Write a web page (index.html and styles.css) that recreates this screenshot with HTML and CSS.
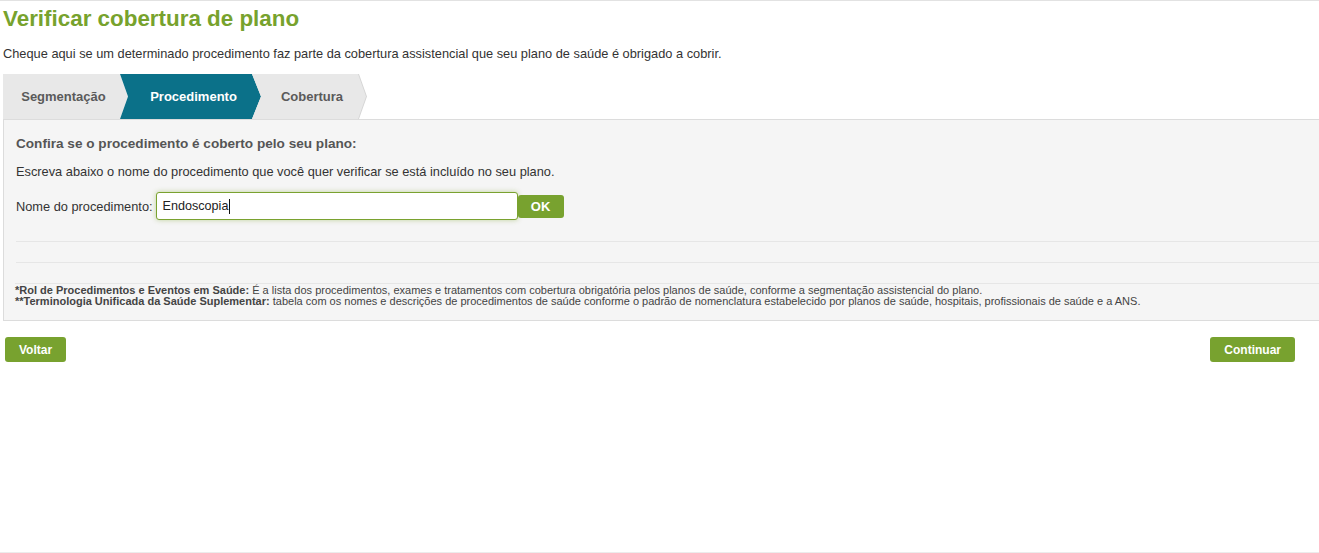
FILE: index.html
```html
<!DOCTYPE html>
<html lang="pt-BR">
<head>
<meta charset="utf-8">
<title>Verificar cobertura de plano</title>
<link rel="stylesheet" href="styles.css">
</head>
<body>
<div class="page">
  <h1 class="title">Verificar cobertura de plano</h1>
  <p class="intro">Cheque aqui se um determinado procedimento faz parte da cobertura assistencial que seu plano de saúde é obrigado a cobrir.</p>

  <nav class="steps">
    <div class="step step-first">Segmentação</div>
    <div class="step step-active">Procedimento</div>
    <div class="step step-last"><span class="step-inner">Cobertura</span></div>
  </nav>

  <section class="panel">
    <h2 class="panel-title">Confira se o procedimento é coberto pelo seu plano:</h2>
    <p class="panel-text">Escreva abaixo o nome do procedimento que você quer verificar se está incluído no seu plano.</p>
    <div class="search-row">
      <label class="search-label" for="proc">Nome do procedimento:</label>
      <div class="search-input"><span class="typed">Endoscopia</span><span class="caret"></span></div>
      <button class="btn btn-ok" type="button">OK</button>
    </div>
    <div class="results">
      <div class="result-row"></div>
      <div class="result-row"></div>
      <div class="result-row notes">
        <p><b>*Rol de Procedimentos e Eventos em Saúde:</b> É a lista dos procedimentos, exames e tratamentos com cobertura obrigatória pelos planos de saúde, conforme a segmentação assistencial do plano.</p>
        <p><b>**Terminologia Unificada da Saúde Suplementar:</b> tabela com os nomes e descrições de procedimentos de saúde conforme o padrão de nomenclatura estabelecido por planos de saúde, hospitais, profissionais de saúde e a ANS.</p>
      </div>
    </div>
  </section>

  <div class="actions">
    <button class="btn btn-nav" type="button">Voltar</button>
    <button class="btn btn-nav" type="button">Continuar</button>
  </div>
</div>
</body>
</html>
```

FILE: styles.css
```css
html, body {
  margin: 0;
  padding: 0;
}
body {
  font-family: "Liberation Sans", Arial, sans-serif;
  color: #333;
  background: #fff;
  overflow: hidden;
  height: 553px;
  border-top: 1px solid #e2e2e2;
  border-bottom: 1px solid #ececec;
  box-sizing: border-box;
}
.page {
  padding: 0 0 0 3px;
}
.title {
  margin: 5px 0 0 0;
  font-size: 22.4px;
  line-height: 25px;
  font-weight: bold;
  color: #77a22d;
}
.intro {
  margin: 15px 0 0 0;
  font-size: 12.8px;
  line-height: 15px;
  color: #333;
}
.steps {
  display: flex;
  margin-top: 13px;
  height: 45px;
}
.step {
  height: 45px;
  display: flex;
  align-items: center;
  justify-content: center;
  font-size: 13px;
  font-weight: bold;
  color: #5a5a5a;
  box-sizing: border-box;
}
.step-first {
  width: 125px;
  background: #e8e8e8;
  padding-right: 4px;
  clip-path: polygon(0 0, calc(100% - 8px) 0, 100% 50%, calc(100% - 8px) 100%, 0 100%);
}
.step-active {
  width: 141px;
  margin-left: -8px;
  background: #0b7189;
  color: #fff;
  padding-left: 6px;
  clip-path: polygon(0 0, calc(100% - 9px) 0, 100% 50%, calc(100% - 9px) 100%, 0 100%, 8px 50%);
}
.step-last {
  width: 115px;
  margin-left: -9px;
  background: #d6d6d6;
  clip-path: polygon(0 0, calc(100% - 8px) 0, 100% 50%, calc(100% - 8px) 100%, 0 100%, 9px 50%);
  padding: 0;
}
.step-inner {
  display: flex;
  align-items: center;
  justify-content: center;
  width: 100%;
  height: 100%;
  background: #e8e8e8;
  padding-left: 5px;
  box-sizing: border-box;
  clip-path: polygon(0 0, calc(100% - 9px) 0, calc(100% - 1px) 50%, calc(100% - 9px) 100%, 0 100%, 9px 50%);
}
.panel {
  margin-right: -20px;
  background: #f5f5f5;
  border: 1px solid #dcdcdc;
  padding: 12px 0 0 12px;
  height: 202px;
  box-sizing: border-box;
}
.panel-title {
  margin: 4px 0 0 0;
  font-size: 13.6px;
  line-height: 16px;
  font-weight: bold;
  color: #555;
}
.panel-text {
  margin: 13px 0 0 0;
  font-size: 12.8px;
  line-height: 14px;
  color: #333;
}
.search-row {
  display: flex;
  align-items: center;
  margin-top: 13px;
}
.search-label {
  font-size: 12.8px;
  color: #333;
  margin-right: 3px;
}
.search-input {
  width: 362px;
  height: 28px;
  box-sizing: border-box;
  background: #fff;
  border: 1px solid #7aa22f;
  border-radius: 3px;
  box-shadow: 0 0 5px rgba(122, 162, 47, 0.45);
  display: flex;
  align-items: center;
  padding-left: 6px;
  font-size: 12.6px;
  color: #222;
}
.caret {
  display: inline-block;
  width: 1px;
  height: 15px;
  background: #111;
  margin-left: 1px;
}
.btn {
  font-family: "Liberation Sans", Arial, sans-serif;
  border: none;
  background: #78a22f;
  color: #fff;
  font-weight: bold;
  border-radius: 3px;
  cursor: pointer;
  padding: 0;
}
.btn-ok {
  width: 46px;
  height: 23px;
  font-size: 13px;
}
.results {
  margin-top: 21px;
}
.result-row {
  border-top: 1px solid #e6e6e6;
  height: 20px;
}
.notes {
  height: auto;
  padding-top: 1px;
  margin-left: -1px;
}
.notes p {
  margin: 0;
  font-size: 11px;
  line-height: 11px;
  color: #444;
}
.actions {
  display: flex;
  justify-content: space-between;
  padding: 16px 24px 0 2px;
}
.btn-nav {
  height: 25px;
  font-size: 12px;
  padding: 0 14px;
}
```
